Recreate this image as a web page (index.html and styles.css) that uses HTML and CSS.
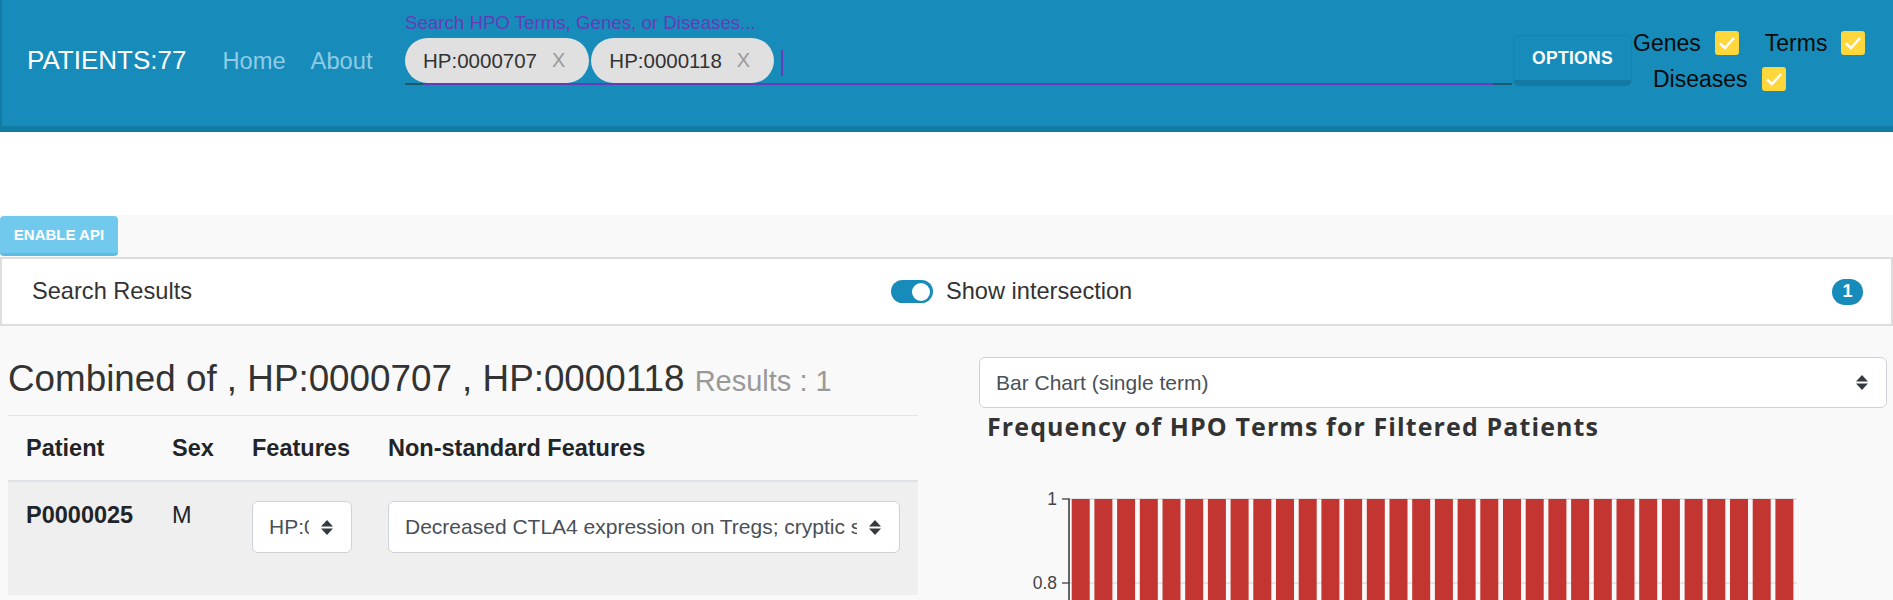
FILE: index.html
```html
<!DOCTYPE html>
<html>
<head>
<meta charset="utf-8">
<title>Patients</title>
<link rel="stylesheet" href="styles.css">
</head>
<body>
<header class="topbar">
  <div class="brand-group">
    <span class="brand">PATIENTS:77</span>
    <a class="nav-link">Home</a>
    <a class="nav-link">About</a>
  </div>
  <div class="search">
    <div class="search-label">Search HPO Terms, Genes, or Diseases...</div>
    <div class="chip-row">
      <span class="chip"><span class="chip-text">HP:0000707</span><span class="chip-x">X</span></span>
      <span class="chip"><span class="chip-text">HP:0000118</span><span class="chip-x">X</span></span>
      <span class="caret"></span>
    </div>
    <div class="underline"><div class="underline-fill"></div></div>
  </div>
  <button class="options-btn">OPTIONS</button>
  <div class="filters">
    <div class="filter-row">
      <label class="filter first"><span>Genes</span><span class="cb"><svg viewBox="0 0 24 24" width="24" height="24"><path d="M5 12.5 L10 17 L19 7" fill="none" stroke="#fff" stroke-width="2.4"/></svg></span></label>
      <label class="filter"><span>Terms</span><span class="cb"><svg viewBox="0 0 24 24" width="24" height="24"><path d="M5 12.5 L10 17 L19 7" fill="none" stroke="#fff" stroke-width="2.4"/></svg></span></label>
    </div>
    <div class="filter-row second">
      <label class="filter"><span>Diseases</span><span class="cb"><svg viewBox="0 0 24 24" width="24" height="24"><path d="M5 12.5 L10 17 L19 7" fill="none" stroke="#fff" stroke-width="2.4"/></svg></span></label>
    </div>
  </div>
</header>
<div class="spacer"></div>
<main class="main">
  <button class="api-btn">ENABLE API</button>
  <section class="panel">
    <div class="panel-title">Search Results</div>
    <div class="toggle-group">
      <span class="toggle"><span class="knob"></span></span>
      <span class="toggle-label">Show intersection</span>
    </div>
    <span class="badge">1</span>
  </section>
  <div class="content">
    <div class="left">
      <h1 class="combined">Combined of , HP:0000707 , HP:0000118 <small class="results">Results : 1</small></h1>
      <table class="ptable">
        <colgroup>
          <col class="c1"><col class="c2"><col class="c3"><col class="c4">
        </colgroup>
        <thead>
          <tr><th>Patient</th><th>Sex</th><th>Features</th><th>Non-standard Features</th></tr>
        </thead>
        <tbody>
          <tr>
            <th class="rowhead">P0000025</th>
            <td>M</td>
            <td>
              <div class="select">
                <span class="select-text">HP:0000707</span>
                <svg class="select-arrow" viewBox="0 0 12 15" width="12" height="15"><path d="M0 6.5 L6 0 L12 6.5 Z M0 8.5 L6 15 L12 8.5 Z" fill="#343a40"/></svg>
              </div>
            </td>
            <td>
              <div class="select">
                <span class="select-text">Decreased CTLA4 expression on Tregs; cryptic splice site</span>
                <svg class="select-arrow" viewBox="0 0 12 15" width="12" height="15"><path d="M0 6.5 L6 0 L12 6.5 Z M0 8.5 L6 15 L12 8.5 Z" fill="#343a40"/></svg>
              </div>
            </td>
          </tr>
        </tbody>
      </table>
    </div>
    <div class="right">
      <div class="select chart-select">
        <span class="select-text">Bar Chart (single term)</span>
        <svg class="select-arrow" viewBox="0 0 12 15" width="12" height="15"><path d="M0 6.5 L6 0 L12 6.5 Z M0 8.5 L6 15 L12 8.5 Z" fill="#343a40"/></svg>
      </div>
      <h2 class="chart-title">Frequency of HPO Terms for Filtered Patients</h2>
      <svg class="chart" viewBox="0 0 908 159" width="908" height="159">
        <line x1="90" y1="58" x2="818" y2="58" stroke="#cfcfcf" stroke-width="1"/>
        <line x1="90" y1="142" x2="818" y2="142" stroke="#cfcfcf" stroke-width="1"/>
        <g fill="#c23531">
          <rect x="92.7" y="58" width="18" height="120"/>
          <rect x="115.4" y="58" width="18" height="120"/>
          <rect x="138.1" y="58" width="18" height="120"/>
          <rect x="160.8" y="58" width="18" height="120"/>
          <rect x="183.5" y="58" width="18" height="120"/>
          <rect x="206.2" y="58" width="18" height="120"/>
          <rect x="228.9" y="58" width="18" height="120"/>
          <rect x="251.6" y="58" width="18" height="120"/>
          <rect x="274.3" y="58" width="18" height="120"/>
          <rect x="297.0" y="58" width="18" height="120"/>
          <rect x="319.7" y="58" width="18" height="120"/>
          <rect x="342.4" y="58" width="18" height="120"/>
          <rect x="365.1" y="58" width="18" height="120"/>
          <rect x="387.8" y="58" width="18" height="120"/>
          <rect x="410.5" y="58" width="18" height="120"/>
          <rect x="433.2" y="58" width="18" height="120"/>
          <rect x="455.9" y="58" width="18" height="120"/>
          <rect x="478.6" y="58" width="18" height="120"/>
          <rect x="501.3" y="58" width="18" height="120"/>
          <rect x="524.0" y="58" width="18" height="120"/>
          <rect x="546.7" y="58" width="18" height="120"/>
          <rect x="569.4" y="58" width="18" height="120"/>
          <rect x="592.1" y="58" width="18" height="120"/>
          <rect x="614.8" y="58" width="18" height="120"/>
          <rect x="637.5" y="58" width="18" height="120"/>
          <rect x="660.2" y="58" width="18" height="120"/>
          <rect x="682.9" y="58" width="18" height="120"/>
          <rect x="705.6" y="58" width="18" height="120"/>
          <rect x="728.3" y="58" width="18" height="120"/>
          <rect x="751.0" y="58" width="18" height="120"/>
          <rect x="773.7" y="58" width="18" height="120"/>
          <rect x="796.4" y="58" width="18" height="120"/>
        </g>
        <line x1="90" y1="57.5" x2="90" y2="159" stroke="#333" stroke-width="1.5"/>
        <line x1="83" y1="58" x2="90" y2="58" stroke="#333" stroke-width="1.2"/>
        <line x1="83" y1="142" x2="90" y2="142" stroke="#333" stroke-width="1.2"/>
        <text class="tick" x="78" y="58" text-anchor="end" dominant-baseline="central">1</text>
        <text class="tick" x="78" y="142" text-anchor="end" dominant-baseline="central">0.8</text>
      </svg>
    </div>
  </div>
</main>
</body>
</html>
```

FILE: styles.css
```css
* { box-sizing: border-box; }

html, body {
  margin: 0;
  padding: 0;
}

body {
  font-family: "Liberation Sans", Arial, sans-serif;
  background: #f9f9f9;
  color: #333;
  overflow: hidden;
}

/* ---------- top bar ---------- */
.topbar {
  display: flex;
  align-items: flex-start;
  height: 132px;
  background: #178cbb;
  border-bottom: 6px solid #137aa3;
  border-left: 2px solid #137aa3;
}

.brand-group {
  display: flex;
  align-items: baseline;
  width: 378px;
  flex-shrink: 0;
  margin-left: 25px;
  margin-top: 45px;
  line-height: 30px;
}

.brand {
  font-size: 26px;
  color: #fff;
}

.nav-link {
  font-size: 23.7px;
  color: #8fcbe4;
  margin-left: 36px;
}

.nav-link + .nav-link {
  margin-left: 25px;
}

.search {
  width: 1107px;
  flex-shrink: 0;
  margin-top: 12px;
}

.search-label {
  font-size: 18.7px;
  line-height: 22px;
  color: #673ab7;
}

.chip-row {
  display: flex;
  align-items: center;
  height: 45px;
  margin-top: 4px;
}

.chip {
  display: flex;
  align-items: center;
  height: 45px;
  border-radius: 23px;
  background: #e0e0e0;
  padding: 0 24px 0 18px;
  margin-right: 2px;
  font-size: 20.5px;
  color: #333;
}

.chip-x {
  margin-left: 15px;
  font-size: 20px;
  color: #9a9a9a;
}

.caret {
  width: 2px;
  height: 26px;
  margin-left: 5px;
  margin-top: 4px;
  background: #673ab7;
}

.underline {
  height: 2px;
  background: #1b5a6d;
}

.underline-fill {
  height: 2px;
  margin: 0 19px 0 18px;
  background: #673ab7;
}

.options-btn {
  flex-shrink: 0;
  width: 119px;
  height: 51px;
  margin-top: 35px;
  margin-left: 1px;
  padding: 0;
  background: #178cbb;
  border: 1px solid #1583b1;
  border-bottom: 6px solid #137aa3;
  border-radius: 6px;
  color: #fff;
  font-family: "Liberation Sans", Arial, sans-serif;
  font-weight: 700;
  font-size: 17.5px;
  letter-spacing: 0.3px;
}

.filters {
  margin-left: 1px;
  margin-top: 25px;
}

.filter-row {
  display: flex;
  align-items: center;
  height: 36px;
}

.filter-row.second {
  padding-left: 20px;
}

.filter {
  display: flex;
  align-items: center;
  gap: 14px;
  font-size: 23px;
  color: #0a0a0a;
}

.filter.first {
  margin-right: 26px;
}

.cb {
  display: block;
  width: 24px;
  height: 24px;
  border-radius: 3px;
  background: #fdd73c;
}

.cb svg { display: block; }

.spacer {
  height: 83px;
  background: #fff;
}

/* ---------- main ---------- */
.main {
  padding-top: 1px;
  background: #f9f9f9;
}

.api-btn {
  display: block;
  width: 118px;
  height: 40px;
  padding: 0;
  background: #72c9ee;
  border: none;
  border-bottom: 3px solid #5bbde6;
  border-radius: 4px;
  color: #fff;
  font-family: "Liberation Sans", Arial, sans-serif;
  font-weight: 700;
  font-size: 15px;
}

.panel {
  display: flex;
  align-items: center;
  height: 69px;
  margin-top: 1px;
  padding: 0 28px 0 30px;
  background: #fff;
  border: 2px solid #dddddd;
  font-size: 23.6px;
  color: #333;
}

.panel-title {
  width: 859px;
  flex-shrink: 0;
}

.toggle-group {
  display: flex;
  align-items: center;
  gap: 13px;
}

.toggle {
  display: flex;
  align-items: center;
  justify-content: flex-end;
  width: 42px;
  height: 23px;
  border-radius: 12px;
  background: #178cbb;
  padding-right: 3px;
}

.knob {
  width: 18px;
  height: 18px;
  border-radius: 50%;
  background: #fff;
}

.badge {
  margin-left: auto;
  display: flex;
  align-items: center;
  justify-content: center;
  width: 31px;
  height: 26px;
  border-radius: 13px;
  background: #178cbb;
  color: #fff;
  font-weight: 700;
  font-size: 18px;
}

.content {
  display: grid;
  grid-template-columns: 910px 908px;
  column-gap: 61px;
  padding-left: 8px;
}

.combined {
  margin: 33px 0 14px;
  font-size: 36.8px;
  line-height: 40px;
  font-weight: 400;
  color: #333;
  white-space: nowrap;
}

.results {
  font-size: 29px;
  color: #999;
}

.ptable {
  width: 910px;
  border-collapse: collapse;
  table-layout: fixed;
  color: #212529;
}

.c1 { width: 146px; }
.c2 { width: 80px; }
.c3 { width: 136px; }
.c4 { width: 548px; }

.ptable thead th {
  text-align: left;
  font-size: 23.5px;
  font-weight: 700;
  line-height: 28px;
  padding: 18px 18px;
  border-top: 1px solid #e1e4e8;
  border-bottom: 2px solid #dee2e6;
}

.ptable tbody tr {
  background: #efefef;
}

.ptable tbody th,
.ptable tbody td {
  text-align: left;
  vertical-align: top;
  font-size: 23.5px;
  line-height: 28px;
  padding: 19px 18px 42px;
}

.ptable tbody td { font-weight: 400; }

.rowhead { font-weight: 700; }

.select {
  display: flex;
  align-items: center;
  height: 52px;
  border: 1.5px solid #cdd3da;
  border-radius: 6px;
  background: #fff;
  padding: 0 18px 0 16px;
  font-size: 21px;
  line-height: 26px;
  color: #495057;
}

.select-text {
  flex: 1;
  min-width: 0;
  overflow: hidden;
  white-space: nowrap;
}

.select-arrow {
  flex-shrink: 0;
  margin-left: 12px;
}

.chart-select {
  margin-top: 31px;
  height: 51px;
}

.chart-title {
  margin: 3px 0 0 8px;
  font-family: "Open Sans", "Noto Sans", sans-serif;
  font-weight: 700;
  font-size: 25px;
  letter-spacing: 1.1px;
  line-height: 30px;
  color: #333;
  white-space: nowrap;
}

.chart {
  display: block;
}

.tick {
  font-family: "Liberation Sans", Arial, sans-serif;
  font-size: 17.5px;
  fill: #444;
}
```
